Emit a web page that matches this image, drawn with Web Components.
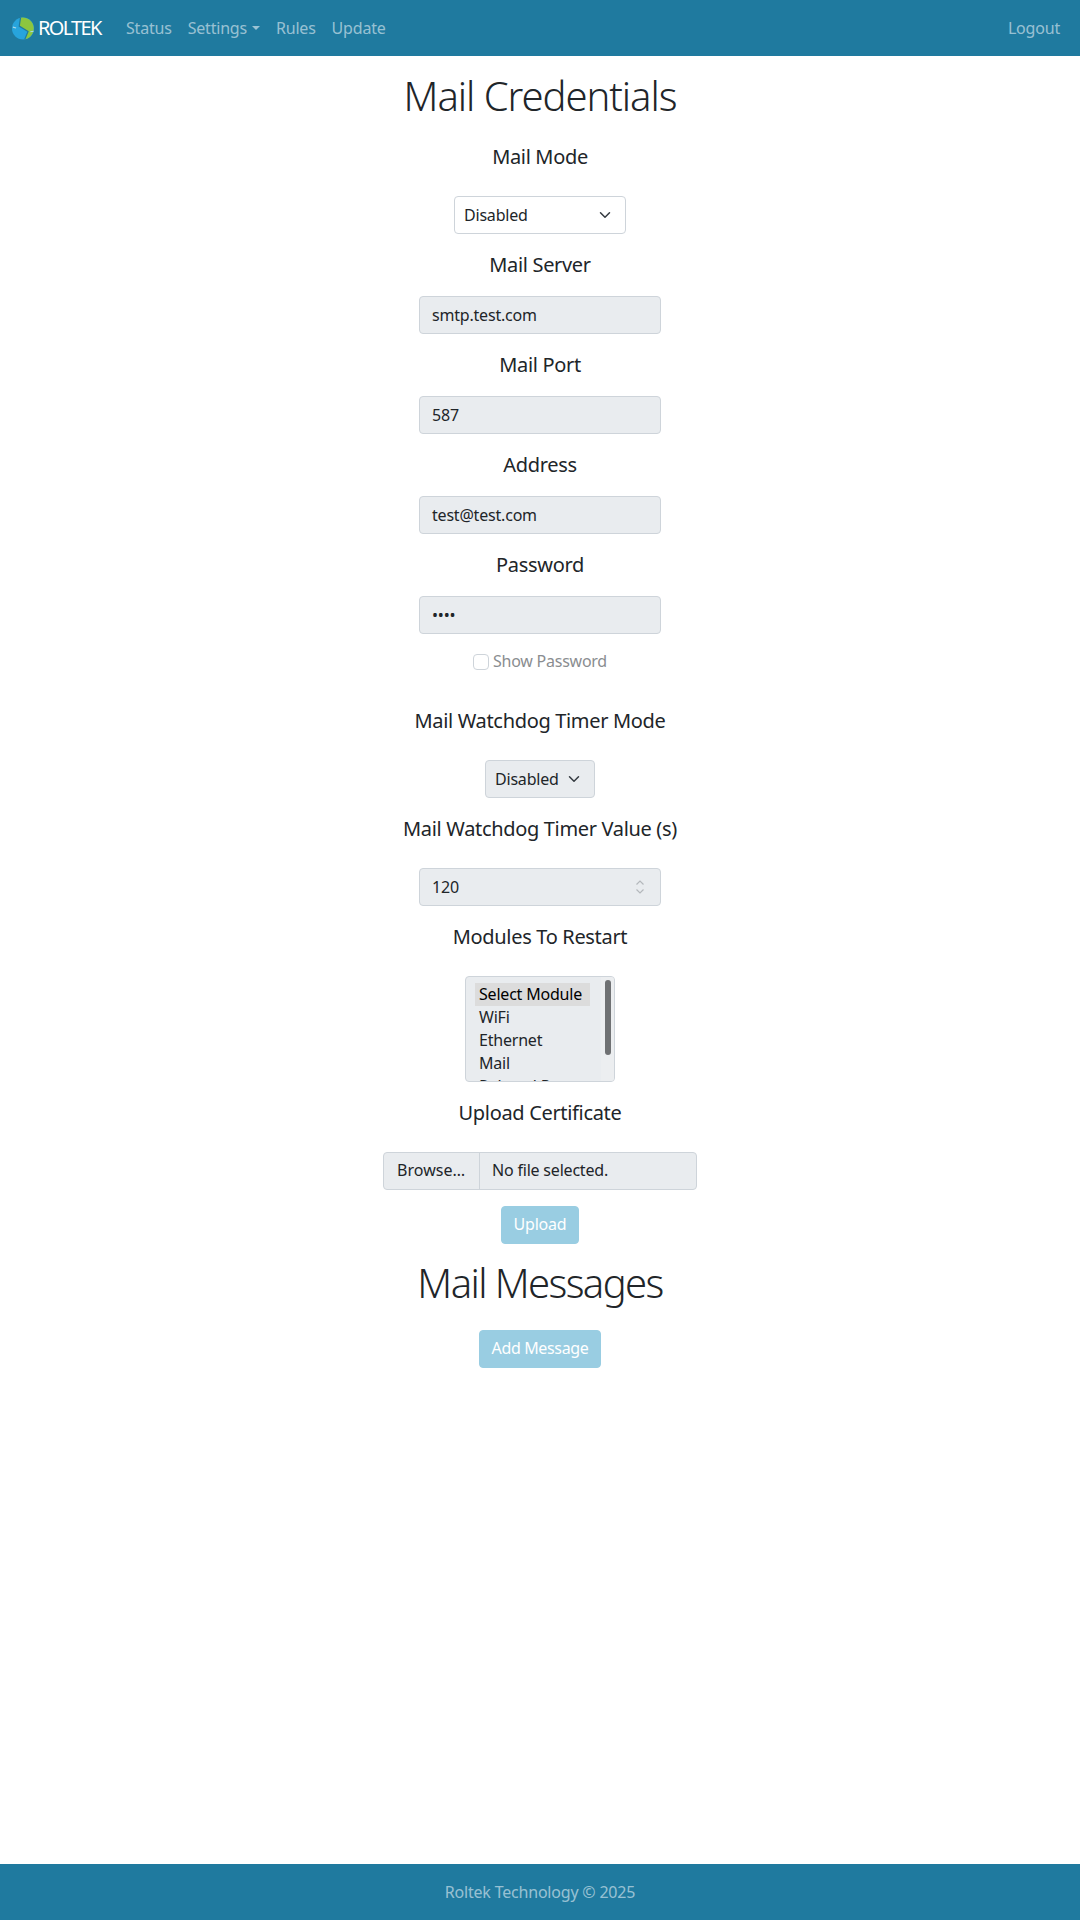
<!DOCTYPE html>
<html><head><meta charset="utf-8"><style>
html,body{margin:0;height:100%}
body{font-family:"Noto Sans","Open Sans",sans-serif;font-size:16px;letter-spacing:-.2px;color:#212529;background:#fff}
</style></head><body>
<app-page></app-page>
<template id="t-page"><style>
:host{display:flex;flex-direction:column;height:1920px}
main{flex:1;display:flex;flex-direction:column;align-items:center}
</style><top-nav></top-nav><main>
<page-title style="padding-top:16px">Mail Credentials</page-title>
<field-block label="Mail Mode" top="25" gap="27"><fake-select w="172" text="Disabled"></fake-select></field-block>
<field-block label="Mail Server"><fake-input text="smtp.test.com"></fake-input></field-block>
<field-block label="Mail Port"><fake-input text="587"></fake-input></field-block>
<field-block label="Address"><fake-input text="test@test.com"></fake-input></field-block>
<field-block label="Password"><fake-input text="••••"></fake-input></field-block>
<show-pass></show-pass>
<field-block label="Mail Watchdog Timer Mode" top="34" gap="27"><fake-select w="110" grey text="Disabled"></fake-select></field-block>
<field-block label="Mail Watchdog Timer Value (s)" gap="27"><fake-input spin text="120"></fake-input></field-block>
<field-block label="Modules To Restart" gap="27"><module-list></module-list></field-block>
<field-block label="Upload Certificate" top="19" gap="27"><file-pick></file-pick></field-block>
<soft-button style="margin-top:16px">Upload</soft-button>
<page-title style="padding-top:15px;letter-spacing:-1.6px">Mail Messages</page-title>
<soft-button style="margin-top:23px;letter-spacing:-.35px">Add Message</soft-button>
</main><bottom-bar></bottom-bar></template>

<template id="t-nav"><style>
:host{display:flex;align-items:center;height:56px;background:#1f7a9f;padding:0 20px 0 12px;flex:none}
.logo{display:flex;align-items:center;width:90px;margin-right:16px}
.word{font-size:20px;color:#fff;letter-spacing:-1.7px;margin-left:4px;line-height:1}
a{color:rgba(255,255,255,.55);padding:0 8px;display:flex;align-items:center}
.car{width:0;height:0;border-top:4.8px solid;border-left:4.8px solid transparent;border-right:4.8px solid transparent;margin-left:5px}
.sp{flex:1}
</style>
<div class="logo"><svg width="22" height="23" viewBox="0 0 24 24" style="flex:none"><circle cx="12" cy="12" r="12" fill="#27a4dc"/><path d="M9.3 .2A12 12 0 0 1 14 23.8L17.5 15.3 7.9 9.4Z" fill="#8cc63f"/><path d="M9.3 .2 7.9 9.4 17.5 15.3 14 23.8" fill="none" stroke="#1f7a9f" stroke-width="1.3"/><path d="M1 10.5l3.5 1M20 15.5l3.5-.5" stroke="#a8d8ea" stroke-width="1.2"/></svg><span class="word">ROLTEK</span></div>
<a>Status</a><a>Settings<i class="car"></i></a><a>Rules</a><a>Update</a><span class="sp"></span><a style="padding-right:0">Logout</a></template>

<template id="t-title"><style>:host{display:block;text-align:center;font-size:40px;font-weight:300;line-height:48px;letter-spacing:-1.05px}</style><slot></slot></template>

<template id="t-field"><style>:host{display:flex;flex-direction:column;align-items:center}
.l{font-size:20px;line-height:24px;margin-bottom:19px;text-align:center;letter-spacing:-.33px}</style><div class="l"></div><slot></slot></template>

<template id="t-input"><style>:host{display:flex;align-items:center;box-sizing:border-box;width:242px;height:38px;padding:0 12px 1px;background:#e9ecef;border:1px solid #ced4da;border-radius:4px;margin-bottom:19px;line-height:24px;justify-content:space-between}
svg{margin-right:3.5px}</style><span></span></template>

<template id="t-select"><style>:host{display:flex;align-items:center;justify-content:space-between;box-sizing:border-box;height:38px;padding:0 12px 0 9px;border:1px solid #ced4da;border-radius:4px;margin-bottom:19px}
span{margin-top:-1px}
:host([grey]){background:#e9ecef}</style><span></span><svg width="16" height="16" viewBox="0 0 16 16"><path d="M2 5l6 6 6-6" fill="none" stroke="#343a40" stroke-width="2" stroke-linecap="round" stroke-linejoin="round" transform="translate(2 2) scale(.75)"/></svg></template>

<template id="t-show"><style>:host{display:flex;align-items:center;color:#8a8d90;height:24px;margin-top:-3px;margin-bottom:1px;letter-spacing:-.25px}
span{margin-top:-2px}
i{display:block;box-sizing:border-box;width:16px;height:16px;border:1px solid #ced4da;border-radius:4px;margin-right:4px;background:#fff}</style><i></i><span>Show Password</span></template>

<template id="t-list"><style>:host{display:block;box-sizing:border-box;width:150px;height:106px;background:#e9ecef;border:1px solid #ced4da;border-radius:4px;position:relative;overflow:hidden;padding:6px 0 0 9px;margin-bottom:0;line-height:23px}
div{padding-left:4px;height:23px;width:115px;box-sizing:border-box;color:#212529}
.s{background:#dcdcdc;color:#000}
.track{position:absolute;right:0;top:0;bottom:0;width:13px;background:#eceef0}
.bar{position:absolute;right:3px;top:3px;width:6px;height:75px;border-radius:3px;background:#6f7173}
</style><div class="s">Select Module</div><div>WiFi</div><div>Ethernet</div><div>Mail</div><div>Relayed Post</div><span class="track"></span><span class="bar"></span></template>

<template id="t-file"><style>:host{display:flex;box-sizing:border-box;width:314px;height:38px;background:#e9ecef;border:1px solid #ced4da;border-radius:4px;line-height:35px}
.b{padding:0 0 0 13px;border-right:1px solid #ced4da;width:82px;flex:none;letter-spacing:.05px}.t{padding-left:12px}</style><span class="b">Browse…</span><span class="t">No file selected.</span></template>

<template id="t-btn"><style>:host{display:block;box-sizing:border-box;height:38px;padding:0 12px;line-height:35px;background:#99cde2;color:#fff;border-radius:4px;border:1px solid #99cde2}</style><slot></slot></template>

<template id="t-foot"><style>:host{display:flex;align-items:center;justify-content:center;height:56px;background:#1f7a9f;color:rgba(255,255,255,.55);flex:none}</style>Roltek Technology © 2025</template>

<script>
function def(name,tid,init){customElements.define(name,class extends HTMLElement{constructor(){super();this.attachShadow({mode:"open"}).appendChild(document.getElementById(tid).content.cloneNode(true))}
connectedCallback(){init&&init(this,this.shadowRoot)}})}
def("top-nav","t-nav");def("page-title","t-title");
def("field-block","t-field",(h,s)=>{const l=s.querySelector(".l");l.textContent=h.getAttribute("label");if(h.hasAttribute("gap"))l.style.marginBottom=h.getAttribute("gap")+"px";if(h.hasAttribute("top"))h.style.marginTop=h.getAttribute("top")+"px"});
def("fake-input","t-input",(h,s)=>{s.querySelector("span").textContent=h.getAttribute("text");if(h.hasAttribute("spin"))s.querySelector("span").insertAdjacentHTML("afterend",'<svg width="10" height="16" viewBox="0 0 10 16"><path d="M1.5 5.5L5 2l3.5 3.5M1.5 10.5L5 14l3.5-3.5" fill="none" stroke="#b4b8bc" stroke-width="1.2"/></svg>')});
def("fake-select","t-select",(h,s)=>{s.querySelector("span").textContent=h.getAttribute("text");h.style.width=h.getAttribute("w")+"px"});
def("show-pass","t-show");def("module-list","t-list");def("file-pick","t-file");def("soft-button","t-btn");def("bottom-bar","t-foot");
def("app-page","t-page");
</script></body></html>
